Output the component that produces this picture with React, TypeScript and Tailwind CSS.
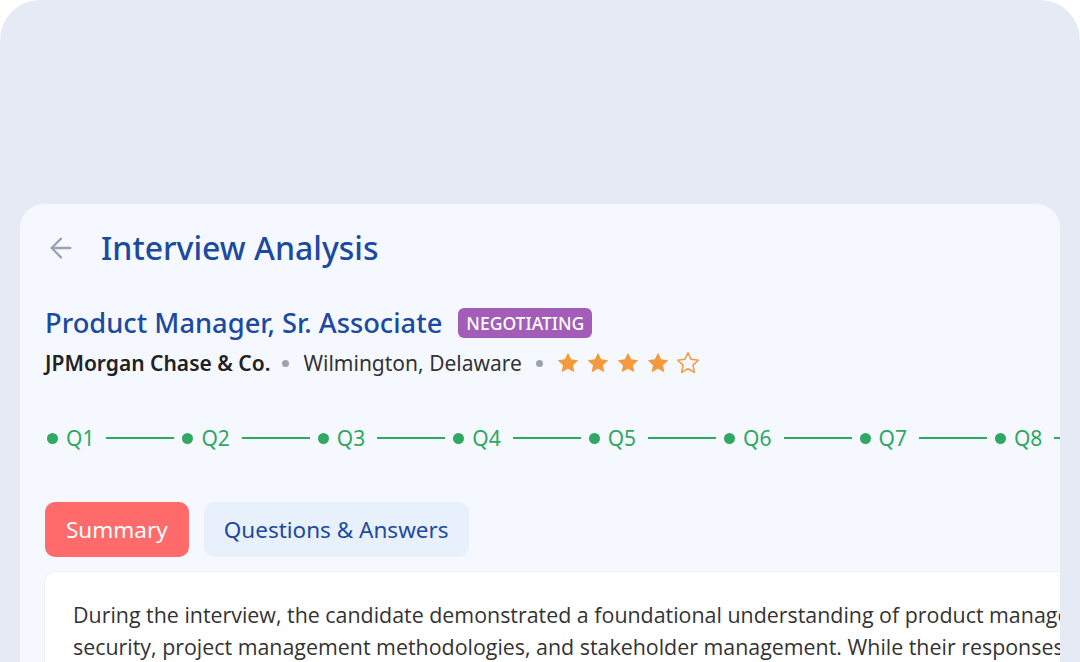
import { ArrowLeft } from "lucide-react";

const font = { fontFamily: '"Noto Sans", "Open Sans", sans-serif' };
const bodyFont = { fontFamily: '"Open Sans", "Noto Sans", sans-serif' };

function Star({ filled }: { filled: boolean }) {
  return (
    <svg width="26" height="26" viewBox="0 0 24 24" className="shrink-0">
      <path
        d="M12 2.5l2.9 6.1 6.6.8-4.9 4.6 1.3 6.6L12 17.3l-5.9 3.3 1.3-6.6-4.9-4.6 6.6-.8z"
        fill={filled ? "#f59a3c" : "none"}
        stroke="#f59a3c"
        strokeWidth={filled ? 0 : 1.4}
        strokeLinejoin="round"
      />
    </svg>
  );
}

export default function App() {
  const qs = ["Q1", "Q2", "Q3", "Q4", "Q5", "Q6", "Q7", "Q8"];

  return (
    <div className="h-[662px] w-[1080px] overflow-hidden bg-white" style={font}>
      <div className="h-[720px] rounded-[40px] bg-[#e6eaf5] pt-[204px] px-5">
        <div className="h-[520px] overflow-hidden rounded-[24px] bg-[#f5f9ff] pl-[25px] pt-[24px]">
          <div className="flex items-center gap-6">
            <ArrowLeft size={32} strokeWidth={1.75} className="text-[#9ca3af]" />
            <h1 className="text-[32px] font-medium leading-[40px] text-[#1c4aa0]">Interview Analysis</h1>
          </div>

          <div className="mt-[38px] flex items-center gap-4">
            <h2 className="text-[27.3px] font-medium leading-[34px] text-[#1c4aa0]">Product Manager, Sr. Associate</h2>
            <span className="rounded-[6px] bg-[#a35db8] px-2 py-[2px] text-[17.5px] font-medium leading-[26px] text-white">
              NEGOTIATING
            </span>
          </div>

          <div className="mt-[8px] flex items-center gap-3 text-[21px] leading-[30px]">
            <span className="font-semibold text-[#222]">JPMorgan Chase &amp; Co.</span>
            <span className="h-[7px] w-[7px] rounded-full bg-[#9ca3af]" />
            <span className="ml-[2px] text-[#333]">Wilmington, Delaware</span>
            <span className="ml-[2px] h-[7px] w-[7px] rounded-full bg-[#9ca3af]" />
            <div className="flex items-center gap-[4px]">
              <Star filled />
              <Star filled />
              <Star filled />
              <Star filled />
              <Star filled={false} />
            </div>
          </div>

          <div className="ml-[2px] mt-[46px] flex items-center whitespace-nowrap text-[21px] leading-[28px] text-[#2ea863]">
            {qs.map((q, i) => (
              <div key={q} className="flex shrink-0 items-center">
                <span className="h-[11px] w-[11px] rounded-full bg-[#2ea863]" />
                <span className="ml-[8px]">{q}</span>
                <span className={"ml-[12px] mr-[8px] h-[2px] bg-[#2ea863] " + (i === qs.length - 1 ? "w-[20px]" : "w-[68px]")} />
              </div>
            ))}
          </div>

          <div className="mt-[50px] flex gap-[15px]">
            <button className="h-[55px] rounded-[10px] bg-[#ff6b6b] px-[21px] text-[22.5px] text-white">Summary</button>
            <button className="h-[55px] rounded-[10px] bg-[#e8f0fb] px-[20px] text-[22.5px] text-[#1c4aa0]">
              Questions &amp; Answers
            </button>
          </div>

          <div className="mt-[14px] -ml-px w-[1100px] rounded-[12px] border border-[#eef1f6] bg-white px-[28px] pt-[27px]">
            <p className="whitespace-nowrap text-[21.4px] leading-[32px] text-[#333]" style={bodyFont}>
              During the interview, the candidate demonstrated a foundational understanding of product management principles, data
              <br />
              security, project management methodologies, and stakeholder management. While their responses were generally sound,
              <br />
              some answers lacked depth.
            </p>
          </div>
        </div>
      </div>
    </div>
  );
}
